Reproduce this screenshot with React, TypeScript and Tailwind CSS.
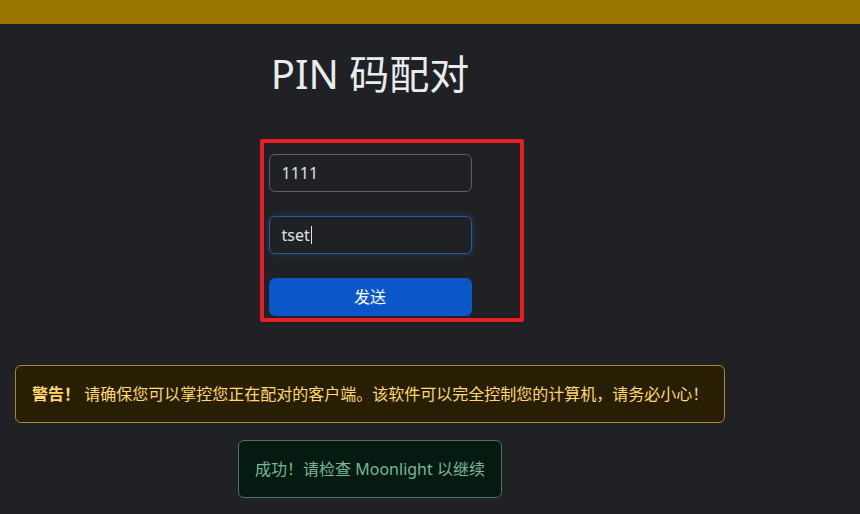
import React from "react";

const font = "font-['Noto_Sans','Noto_Sans_CJK_SC',sans-serif]";

export default function App() {
  return (
    <div className={`min-h-[514px] w-[860px] bg-[#1f2124] text-[#dee2e6] ${font}`}>
      {/* Top bar */}
      <div className="h-6 bg-[#9c7700]" />

      <div className="flex w-[740px] flex-col items-center px-[15px]">
        {/* Title */}
        <h1 className="mt-[26px] text-[40px] font-normal leading-[48px] text-[#e9ecef]">
          PIN 码配对
        </h1>

        {/* Form */}
        <div className="relative mt-[56px] flex w-[203px] flex-col gap-6">
          <div className="flex h-[38px] items-center rounded-md border border-[#5c6167] bg-[#1f2124] px-3 text-base text-[#dee2e6]">
            1111
          </div>
          <div className="flex h-[38px] items-center rounded-md border border-[#34598f] bg-[#1f2124] px-3 text-base text-[#dee2e6] shadow-[0_0_0_3px_rgba(13,110,253,0.12)]">
            tset
            <span className="ml-px h-[18px] w-px bg-[#dee2e6]" />
          </div>
          <button className="h-[38px] rounded-md bg-[#0b56c9] text-base text-white">
            发送
          </button>

          {/* Red annotation box */}
          <div className="pointer-events-none absolute -top-[15px] -right-[52px] -bottom-[6px] -left-[9px] rounded-[2px] border-4 border-[#e81f28]" />
        </div>
      </div>

      <div className="mt-[49px] w-[740px] px-[15px]">
        {/* Warning */}
        <div className="whitespace-nowrap rounded-md border border-[#a88a2c] bg-[#271e03] px-4 py-4 text-base leading-6 text-[#ffda6a]">
          <b>警告！</b> 请确保您可以掌控您正在配对的客户端。该软件可以完全控制您的计算机，请务必小心！
        </div>

        {/* Success */}
        <div className="mt-[17px] flex justify-center">
          <div className="whitespace-nowrap rounded-md border border-[#56705f] bg-[#051b11] px-4 py-4 text-base leading-6 text-[#75b798]">
            成功！请检查 Moonlight 以继续
          </div>
        </div>
      </div>
    </div>
  );
}
